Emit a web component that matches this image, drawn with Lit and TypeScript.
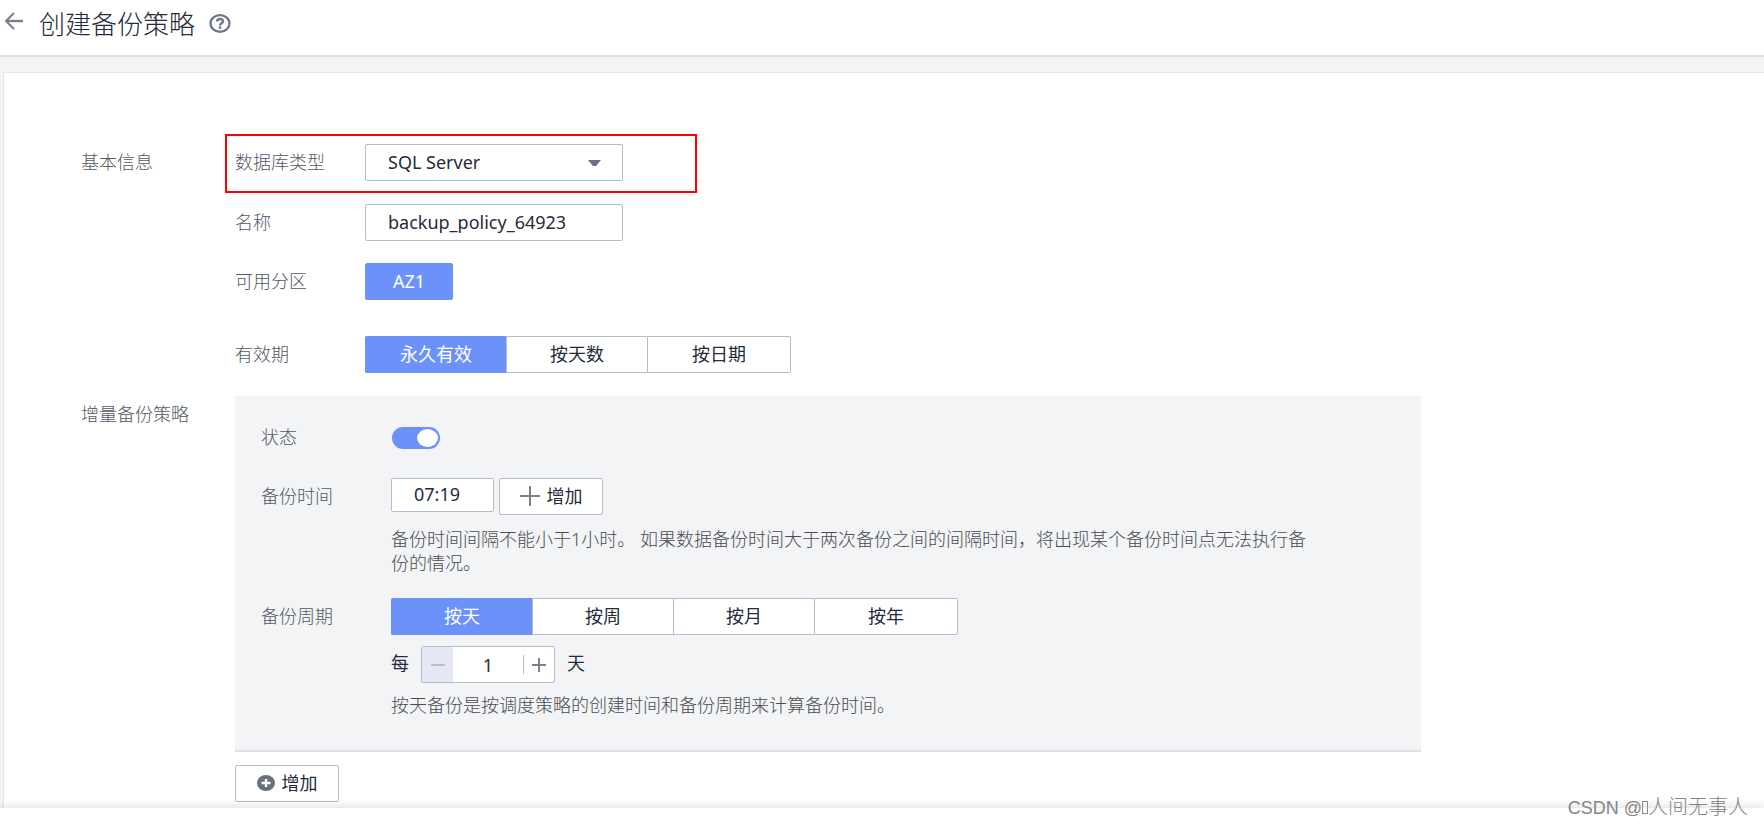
import { LitElement, html, css, svg } from "lit";
import { customElement, property, state } from "lit/decorators.js";
import { classMap } from "lit/directives/class-map.js";

@customElement("segment-group")
class SegmentGroup extends LitElement {
  @property({ attribute: false }) options: string[] = [];
  @property() label = "";
  @state() private active = 0;

  static styles = css`
    :host { display: block; }
    .group { display: flex; }
    .option {
      box-sizing: border-box;
      width: 141px;
      height: 37px;
      padding: 0 0 2px;
      border: 1px solid #b7bccb;
      border-right-width: 0;
      background: #fff;
      color: #252b3a;
      font: inherit;
      cursor: pointer;
    }
    .option:first-child { border-radius: 2px 0 0 2px; }
    .option:last-child { width: 144px; border-right-width: 1px; border-radius: 0 2px 2px 0; }
    .active { background: #6c92fa; border-color: #6c92fa; color: #fff; }
  `;

  render() {
    return html`<div class="group" role="group" aria-label=${this.label}>
      ${this.options.map(
        (o, i) => html`<button
          type="button"
          class=${classMap({ option: true, active: i === this.active })}
          aria-pressed=${i === this.active}
          @click=${() => (this.active = i)}
        >${o}</button>`
      )}
    </div>`;
  }
}

@customElement("app-root")
class AppRoot extends LitElement {
  @state() private days = 1;

  static styles = css`
    :host {
      display: flex;
      flex-direction: column;
      min-height: 100vh;
      background: #f2f4f6;
      color: #252b3a;
      font: 18px/24px "Noto Sans", "Noto Sans CJK SC", sans-serif;
    }
    .header {
      display: flex;
      align-items: center;
      height: 55px;
      padding: 0 4px;
      border-bottom: 2px solid #dfe1e6;
      background: #fff;
      box-sizing: content-box;
    }
    .back { display: flex; margin-bottom: 14px; }
    .title {
      margin: 0 14px 8px 15px;
      font-size: 26px;
      line-height: 32px;
      font-weight: 300;
    }
    .help { display: flex; margin-bottom: 8px; padding: 0; border: 0; background: none; }
    .card {
      flex: 1;
      margin: 15px 0 0 3px;
      padding: 61px 16px 6px 77px;
      border: 1px solid #e6e7ea;
      border-width: 1px 0 0 1px;
      background: #fff;
    }
    .section {
      display: grid;
      grid-template-columns: 154px minmax(0, 1186px);
    }
    .heading { margin: 0; font-size: 18px; line-height: 24px; font-weight: 300; color: #525866; }
    .basic-heading { padding-top: 16px; }
    .incremental { margin-top: 23px; }
    .incremental-heading { padding-top: 6px; }
    .row { display: grid; grid-template-columns: 130px minmax(0, 1fr); align-items: center; }
    .label { padding-bottom: 2px; color: #525866; font-weight: 300; }
    .marked {
      box-sizing: border-box;
      width: 472px;
      margin-left: -10px;
      padding: 8px 0 10px 8px;
      border: 2px solid #f00;
    }
    .name { margin-top: 11px; }
    .zone { margin-top: 22px; }
    .validity { margin-top: 36px; }
    .select { position: relative; width: 258px; }
    .field {
      display: block;
      box-sizing: border-box;
      width: 258px;
      height: 37px;
      padding: 0 22px 2px;
      border: 1px solid #b7bccb;
      border-radius: 2px;
      background: #fff;
      color: #252b3a;
      font: inherit;
      appearance: none;
      outline: none;
    }
    .caret { position: absolute; right: 22px; top: 16px; pointer-events: none; }
    .button {
      display: inline-flex;
      align-items: center;
      justify-content: center;
      gap: 7px;
      box-sizing: border-box;
      width: 104px;
      height: 37px;
      padding: 0 0 2px;
      border: 1px solid #b7bccb;
      border-radius: 2px;
      background: #fff;
      color: #252b3a;
      font: inherit;
      cursor: pointer;
    }
    .primary { width: 88px; border-color: #6c92fa; background: #6c92fa; color: #fff; }
    .panel {
      padding: 29px 26px 32px;
      border-bottom: 2px solid #dfe1e4;
      background: #f2f4f6;
    }
    .status { height: 24px; }
    .toggle {
      display: block;
      width: 48px;
      height: 22px;
      margin: 0 1px;
      border-radius: 11px;
      background: #6c92fa;
      appearance: none;
      cursor: pointer;
    }
    .toggle::before {
      content: "";
      display: block;
      width: 21px;
      height: 18px;
      margin: 0 2px 0 auto;
      border-radius: 50%;
      background: #fff;
      transform: translateY(2px);
    }
    .toggle:not(:checked) { background: #b7bccb; }
    .toggle:not(:checked)::before { margin: 0 auto 0 2px; }
    .time { margin-top: 29px; }
    .times { display: flex; align-items: flex-start; gap: 5px; }
    .clock { width: 103px; height: 34px; }
    .note { max-width: 920px; margin: 0; color: #4a4c52; font-weight: 300; }
    .time-note { margin: 12px 0 0 130px; }
    .period { margin-top: 23px; }
    .every { display: flex; align-items: center; gap: 12px; margin: 11px 0 10px 130px; }
    .unit { padding-bottom: 4px; }
    .counter {
      display: flex;
      align-items: center;
      box-sizing: border-box;
      width: 134px;
      height: 37px;
      border: 1px solid #b7bccb;
      border-radius: 2px;
      background: #fff;
    }
    .step {
      display: flex;
      align-items: center;
      justify-content: center;
      width: 31px;
      height: 35px;
      padding: 0;
      border: 0;
      background: none;
    }
    .minus { background: #e4e9f5; }
    .plus { height: 19px; border-left: 1px solid #b7bccb; }
    .number {
      flex: 1;
      min-width: 0;
      padding: 0;
      border: 0;
      background: none;
      color: #252b3a;
      font: inherit;
      text-align: center;
      outline: none;
    }
    .note-period { margin: 0 0 1px 130px; }
    .add { margin-top: 13px; vertical-align: top; }
    .footer {
      position: relative;
      height: 20px;
      background: #fff;
      box-shadow: 0 -2px 8px rgba(0, 0, 0, 0.12);
    }
    .watermark {
      position: absolute;
      right: 16px;
      bottom: 8px;
      color: #858585;
      font: 300 20px/24px "Liberation Sans", "Noto Sans CJK SC", sans-serif;
      white-space: nowrap;
    }
    .site { font-size: 18px; }
    .missing {
      display: inline-block;
      box-sizing: border-box;
      width: 6px;
      height: 13px;
      border: 1px solid #8b8b8b;
    }
  `;

  private cross(size: number, color: string, both = true) {
    const m = size / 2;
    return html`<svg width=${size} height=${size} viewBox="0 0 ${size} ${size}" fill="none" stroke=${color} stroke-width="2" aria-hidden="true">
      <path d="M0 ${m}H${size}" />
      ${both ? svg`<path d="M${m} 0V${size}" />` : ""}
    </svg>`;
  }

  render() {
    return html`
      <header class="header">
        <a class="back" href="#" aria-label="返回">
          <svg width="20" height="18" viewBox="0 0 20 18" fill="none" stroke="#7a8090" stroke-width="2">
            <path d="M2 9H19" stroke-width="2.4" /><path d="M10 1L2 9L10 17" />
          </svg>
        </a>
        <h1 class="title">创建备份策略</h1>
        <button class="help" type="button" aria-label="帮助">
          <svg width="22" height="19" viewBox="0 0 22 19" fill="none" stroke="#6e7584">
            <ellipse cx="11" cy="9.5" rx="9.5" ry="8.3" stroke-width="2.2" />
            <path d="M8.1 7.6C8.1 4.2 14 4.2 14 7.3C14 9.3 11.1 9.2 11.1 11.4" stroke-width="2.4" />
            <path d="M9.9 13.6H12.2" stroke-width="2.4" />
          </svg>
        </button>
      </header>

      <main class="card">
        <section class="section">
          <h2 class="heading basic-heading">基本信息</h2>
          <div>
            <div class="row marked">
              <label class="label" for="engine">数据库类型</label>
              <div class="select">
                <select id="engine" class="field"><option>SQL Server</option></select>
                <svg class="caret" width="13" height="7" viewBox="0 0 13 7" aria-hidden="true"><path d="M0 0H13L8 6H5Z" fill="#6a7080" /></svg>
              </div>
            </div>
            <div class="row name">
              <label class="label" for="name">名称</label>
              <input id="name" class="field" type="text" value="backup_policy_64923" />
            </div>
            <div class="row zone">
              <span class="label">可用分区</span>
              <div><button class="button primary" type="button">AZ1</button></div>
            </div>
            <div class="row validity">
              <span class="label">有效期</span>
              <segment-group label="有效期" .options=${["永久有效", "按天数", "按日期"]}></segment-group>
            </div>
          </div>
        </section>

        <section class="section incremental">
          <h2 class="heading incremental-heading">增量备份策略</h2>
          <div>
            <div class="panel">
              <div class="row status">
                <label class="label" for="status">状态</label>
                <input id="status" class="toggle" type="checkbox" role="switch" checked />
              </div>
              <div class="row time">
                <label class="label" for="time">备份时间</label>
                <div class="times">
                  <input id="time" class="field clock" type="text" value="07:19" />
                  <button class="button" type="button">${this.cross(20, "#7a8090")}增加</button>
                </div>
              </div>
              <p class="note time-note">备份时间间隔不能小于1小时。 如果数据备份时间大于两次备份之间的间隔时间，将出现某个备份时间点无法执行备份的情况。</p>
              <div class="row period">
                <span class="label">备份周期</span>
                <segment-group label="备份周期" .options=${["按天", "按周", "按月", "按年"]}></segment-group>
              </div>
              <div class="every">
                <label class="unit" for="days">每</label>
                <div class="counter">
                  <button class="step minus" type="button" aria-label="减少" ?disabled=${this.days <= 1} @click=${() => this.days--}>${this.cross(14, "#b9bfca", false)}</button>
                  <input id="days" class="number" type="text" .value=${String(this.days)} />
                  <button class="step plus" type="button" aria-label="增加" @click=${() => this.days++}>${this.cross(14, "#7a8090")}</button>
                </div>
                <span class="unit">天</span>
              </div>
              <p class="note note-period">按天备份是按调度策略的创建时间和备份周期来计算备份时间。</p>
            </div>
            <button class="button add" type="button">
              <svg width="18" height="16" viewBox="0 0 18 16" aria-hidden="true">
                <ellipse cx="9" cy="8" rx="9" ry="8" fill="#6a7080" />
                <path d="M4.5 8H13.5M9 4V12" stroke="#fff" stroke-width="2.4" />
              </svg>增加</button>
          </div>
        </section>
      </main>

      <footer class="footer"><span class="watermark"><span class="site">CSDN @</span><span class="missing"></span>人间无事人</span></footer>
    `;
  }
}
